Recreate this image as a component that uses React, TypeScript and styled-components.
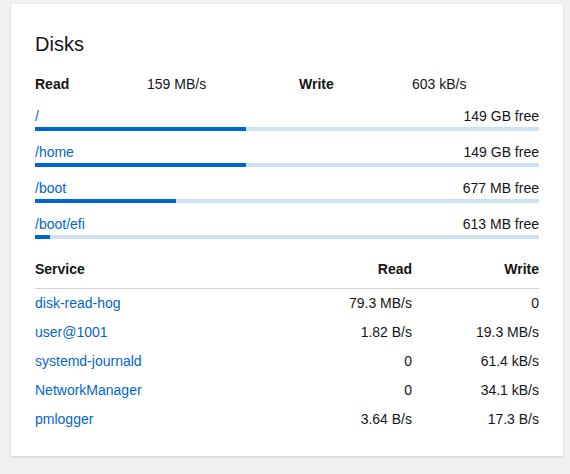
import styled, { createGlobalStyle } from "styled-components";

const GlobalStyle = createGlobalStyle`
  html, body {
    margin: 0;
    padding: 0;
    background: #f0f0f0;
  }
  body {
    font-family: "Liberation Sans", Arial, sans-serif;
    font-size: 14px;
    color: #151515;
  }
`;

const Page = styled.div`
  padding: 4px 7px 16px 11px;
  width: 570px;
  box-sizing: border-box;
`;

const Card = styled.section`
  background: #fff;
  box-shadow: 0 1px 2px rgba(3, 3, 3, 0.12), 0 0 2px rgba(3, 3, 3, 0.06);
  padding: 28px 24px 22px;
  display: flex;
  flex-direction: column;
`;

const Title = styled.h2`
  margin: 0 0 18px;
  font-size: 20px;
  font-weight: 400;
  line-height: 24px;
`;

const Rates = styled.div`
  display: grid;
  grid-template-columns: 112px 152px 113px 1fr;
  line-height: 21px;
  margin-bottom: 11px;
`;

const Term = styled.span`
  font-weight: 700;
`;

const Mounts = styled.div`
  display: flex;
  flex-direction: column;
  gap: 11px;
`;

const Mount = styled.div`
  display: flex;
  flex-direction: column;
`;

const MountHead = styled.div`
  display: flex;
  justify-content: space-between;
  line-height: 21px;
`;

const Link = styled.a`
  color: #0066cc;
  text-decoration: none;
`;

const Track = styled.div`
  height: 4px;
  background: #cde1f5;
`;

const Fill = styled.div`
  height: 100%;
  background: #0066cc;
`;

const Table = styled.table`
  margin-top: 20px;
  width: 100%;
  border-collapse: collapse;
`;

const Th = styled.th<{ $right?: boolean }>`
  text-align: ${(p) => (p.$right ? "right" : "left")};
  font-weight: 700;
  padding: 0 0 8px;
  line-height: 21px;
  border-bottom: 1px solid #d2d2d2;
  width: ${(p) => (p.$right ? "127px" : "auto")};
`;

const Td = styled.td<{ $right?: boolean }>`
  text-align: ${(p) => (p.$right ? "right" : "left")};
  padding: 4px 0;
  line-height: 21px;
`;

const mounts = [
  { path: "/", free: "149 GB free", used: 41.9 },
  { path: "/home", free: "149 GB free", used: 41.9 },
  { path: "/boot", free: "677 MB free", used: 28 },
  { path: "/boot/efi", free: "613 MB free", used: 3 },
];

const services = [
  { name: "disk-read-hog", read: "79.3 MB/s", write: "0" },
  { name: "user@1001", read: "1.82 B/s", write: "19.3 MB/s" },
  { name: "systemd-journald", read: "0", write: "61.4 kB/s" },
  { name: "NetworkManager", read: "0", write: "34.1 kB/s" },
  { name: "pmlogger", read: "3.64 B/s", write: "17.3 B/s" },
];

export default function App() {
  return (
    <Page>
      <GlobalStyle />
      <Card>
        <Title>Disks</Title>
        <Rates>
          <Term>Read</Term>
          <span>159 MB/s</span>
          <Term>Write</Term>
          <span>603 kB/s</span>
        </Rates>
        <Mounts>
          {mounts.map((m) => (
            <Mount key={m.path}>
              <MountHead>
                <Link href="#">{m.path}</Link>
                <span>{m.free}</span>
              </MountHead>
              <Track>
                <Fill style={{ width: `${m.used}%` }} />
              </Track>
            </Mount>
          ))}
        </Mounts>
        <Table>
          <thead>
            <tr>
              <Th>Service</Th>
              <Th $right>Read</Th>
              <Th $right>Write</Th>
            </tr>
          </thead>
          <tbody>
            {services.map((s) => (
              <tr key={s.name}>
                <Td>
                  <Link href="#">{s.name}</Link>
                </Td>
                <Td $right>{s.read}</Td>
                <Td $right>{s.write}</Td>
              </tr>
            ))}
          </tbody>
        </Table>
      </Card>
    </Page>
  );
}
